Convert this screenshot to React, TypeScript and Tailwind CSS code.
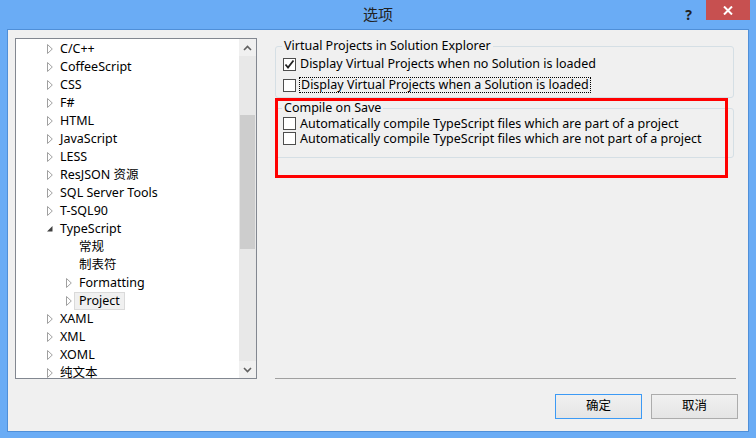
import React from 'react';

const font = { fontFamily: '"Noto Sans", "Noto Sans CJK SC", sans-serif' };

type Node = { label: string; level: number; arrow: 'closed' | 'open' | 'none'; selected?: boolean };

const nodes: Node[] = [
  { label: 'C/C++', level: 0, arrow: 'closed' },
  { label: 'CoffeeScript', level: 0, arrow: 'closed' },
  { label: 'CSS', level: 0, arrow: 'closed' },
  { label: 'F#', level: 0, arrow: 'closed' },
  { label: 'HTML', level: 0, arrow: 'closed' },
  { label: 'JavaScript', level: 0, arrow: 'closed' },
  { label: 'LESS', level: 0, arrow: 'closed' },
  { label: 'ResJSON 资源', level: 0, arrow: 'closed' },
  { label: 'SQL Server Tools', level: 0, arrow: 'closed' },
  { label: 'T-SQL90', level: 0, arrow: 'closed' },
  { label: 'TypeScript', level: 0, arrow: 'open' },
  { label: '常规', level: 1, arrow: 'none' },
  { label: '制表符', level: 1, arrow: 'none' },
  { label: 'Formatting', level: 1, arrow: 'closed' },
  { label: 'Project', level: 1, arrow: 'closed', selected: true },
  { label: 'XAML', level: 0, arrow: 'closed' },
  { label: 'XML', level: 0, arrow: 'closed' },
  { label: 'XOML', level: 0, arrow: 'closed' },
  { label: '纯文本', level: 0, arrow: 'closed' },
];

const Arrow: React.FC<{ kind: Node['arrow'] }> = ({ kind }) => {
  if (kind === 'closed')
    return (
      <svg width="6" height="10" viewBox="0 0 6 10" className="block">
        <path d="M0.5 0.5 L5.3 5 L0.5 9.5 Z" fill="none" stroke="#a0a0a0" strokeWidth="1" />
      </svg>
    );
  if (kind === 'open')
    return (
      <svg width="6" height="10" viewBox="0 0 6 10" className="block">
        <path d="M5.5 2 L5.5 7.5 L0 7.5 Z" fill="#404040" />
      </svg>
    );
  return <span className="block w-[6px]" />;
};

const Checkbox: React.FC<{ checked?: boolean }> = ({ checked }) => (
  <span className="flex h-[13px] w-[13px] shrink-0 items-center justify-center border border-[#4d4d4d] bg-white">
    {checked && (
      <svg width="11" height="11" viewBox="0 0 11 11">
        <path d="M1.5 5.5 L4 8.5 L9.5 1.5" fill="none" stroke="#222" strokeWidth="1.8" />
      </svg>
    )}
  </span>
);

const Tree: React.FC = () => (
  <div className="flex h-[341px] w-[242px] shrink-0 border border-[#828790] bg-white">
    <div className="flex-1 overflow-hidden pt-[1px]">
      {nodes.map((n) => (
        <div key={n.label} className="flex h-[18px] items-center" style={{ paddingLeft: 31 + n.level * 19 }}>
          <Arrow kind={n.arrow} />
          <span
            className={`ml-[2px] h-[18px] px-[4px] text-[12.5px] leading-[16px] text-black ${
              n.selected ? 'border border-[#dadada] bg-[#f0f0f0]' : 'border border-transparent'
            }`}
          >
            {n.label}
          </span>
        </div>
      ))}
    </div>
    <div className="flex w-[17px] shrink-0 flex-col bg-[#e8e8e8]">
      <div className="flex h-[17px] items-center justify-center bg-[#f0f0f0]">
        <svg width="9" height="6" viewBox="0 0 9 6">
          <path d="M1 5 L4.5 1.5 L8 5" fill="none" stroke="#606060" strokeWidth="1.6" />
        </svg>
      </div>
      <div className="h-[59px]" />
      <div className="mx-[1px] h-[134px] bg-[#cdcdcd]" />
      <div className="flex-1" />
      <div className="flex h-[17px] items-center justify-center bg-[#f0f0f0]">
        <svg width="9" height="6" viewBox="0 0 9 6">
          <path d="M1 1 L4.5 4.5 L8 1" fill="none" stroke="#606060" strokeWidth="1.6" />
        </svg>
      </div>
    </div>
  </div>
);

const Button: React.FC<{ label: string; primary?: boolean }> = ({ label, primary }) => (
  <button
    className={`h-[25px] w-[87px] border bg-gradient-to-b from-[#f0f0f0] to-[#e5e5e5] text-[12.5px] text-black ${
      primary ? 'border-[#3c9af5]' : 'border-[#acacac]'
    }`}
  >
    {label}
  </button>
);

export default function App() {
  return (
    <div className="flex h-[438px] w-[756px] flex-col bg-[#6aacf5] px-[7px] pb-[6px]" style={font}>
      {/* Title bar */}
      <div className="relative flex h-[29px] items-center justify-center">
        <span className="pb-[1px] text-[15px] text-[#222]">选项</span>
        <span className="absolute right-[57px] top-[4px] text-[14px] font-bold text-[#222]">?</span>
        <div className="absolute -right-[1px] top-0 flex h-[20px] w-[44px] items-center justify-center bg-[#c75050]">
          <svg width="10" height="9" viewBox="0 0 10 9">
            <path d="M1 0.5 L9 8.5 M9 0.5 L1 8.5" stroke="#fff" strokeWidth="2" />
          </svg>
        </div>
      </div>

      {/* Client area */}
      <div className="relative flex flex-1 flex-col border border-[#4f8fd8] bg-[#f0f0f0] pl-[7px] pr-[10px] pt-[8px]">
        <div className="flex h-[341px]">
          <Tree />
          <div className="ml-[18px] flex w-[461px] flex-col border-b border-[#a0a0a0] text-[12.5px] text-black">
            <fieldset className="w-[459px] rounded-[3px] border border-[#d5dfe5] pb-[4px]">
              <legend className="ml-[6px] px-[2px] leading-[16px]">Virtual Projects in Solution Explorer</legend>
              <div className="mt-[2px] flex h-[16px] items-center pl-[7px]">
                <Checkbox checked />
                <span className="ml-[4px] leading-[16px]">Display Virtual Projects when no Solution is loaded</span>
              </div>
              <div className="mt-[5px] flex h-[16px] items-center pl-[7px]">
                <Checkbox />
                <span className="ml-[3px] border border-dotted border-black px-[1px] leading-[14px]">
                  Display Virtual Projects when a Solution is loaded
                </span>
              </div>
            </fieldset>
            <fieldset className="mt-[2px] w-[459px] rounded-[3px] border border-[#d5dfe5] pb-[11px]">
              <legend className="ml-[6px] px-[2px] leading-[16px]">Compile on Save</legend>
              <div className="flex h-[15px] items-center pl-[7px]">
                <Checkbox />
                <span className="ml-[4px] leading-[15px]">Automatically compile TypeScript files which are part of a project</span>
              </div>
              <div className="flex h-[15px] items-center pl-[7px]">
                <Checkbox />
                <span className="ml-[4px] leading-[15px]">Automatically compile TypeScript files which are not part of a project</span>
              </div>
            </fieldset>
            <div className="flex-1" />
          </div>
        </div>

        <div className="mt-[15px] flex justify-end gap-[9px]">
          <Button label="确定" primary />
          <Button label="取消" />
        </div>

        {/* Red annotation */}
        <div className="pointer-events-none absolute left-[267px] top-[68px] h-[80px] w-[453px] border-[3px] border-[#ff0000]" />
      </div>
    </div>
  );
}
